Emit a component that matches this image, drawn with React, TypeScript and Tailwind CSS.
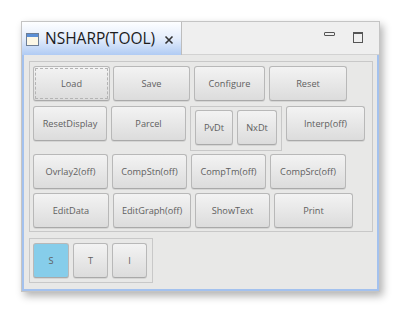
import React from "react";

const font = { fontFamily: '"Open Sans", "Noto Sans", sans-serif' };

function Btn({ label, w, focus, active, h = 35, className = "" }: { label: string; w: number; focus?: boolean; active?: boolean; h?: number; className?: string }) {
  return (
    <div
      style={{ width: w, height: h }}
      className={
        "flex shrink-0 items-center justify-center rounded-[3px] border border-[#b8b8b8] border-b-[#a9a9a9] text-[9.2px] text-[#606060] shadow-[0_1px_0_rgba(0,0,0,0.08)] " +
        (active ? "bg-[#86cdea] " : "bg-gradient-to-b from-[#f3f3f3] to-[#dcdcdc] ") +
        (focus ? "outline-1 outline-dashed outline-[#b4b4b4] outline-offset-[-3px] " : "") +
        className
      }
    >
      {label}
    </div>
  );
}

export default function App() {
  return (
    <div className="h-[313px] w-[403px] bg-white pl-[21px] pt-[21px]" style={font}>
      <div className="flex h-[271px] w-[359px] flex-col border border-[#c4c4c4] bg-[#efefef] shadow-[3px_4px_8px_rgba(0,0,0,0.3)]">
        {/* header */}
        <div className="flex h-[33px] shrink-0">
          <div className="flex w-[160px] items-center border-r border-[#bdbdbd] bg-gradient-to-b from-[#fdfeff] via-[#e4edfb] to-[#b0cbf3] pl-[4px]">
            <svg width="13" height="13" viewBox="0 0 13 13" className="mt-[2px]">
              <rect x="0.5" y="0.5" width="12" height="12" fill="#fdf8e6" stroke="#6d7e95" />
              <rect x="1" y="1" width="11" height="3" fill="#5b8fd6" />
            </svg>
            <span className="ml-[6px] text-[15.5px] leading-none text-[#1c1c1c]">NSHARP(TOOL)</span>
            <svg width="10" height="10" viewBox="0 0 10 10" className="ml-[9px] mt-[2px]">
              <path d="M1.5 1.5 L8.5 8.5 M8.5 1.5 L1.5 8.5" stroke="#333" strokeWidth="1.6" />
            </svg>
          </div>
          <div className="relative flex-1 border-b border-[#d2d2d2]">
            <div className="absolute left-[142px] top-[10px] h-[4px] w-[11px] rounded-[1px] border border-[#555]" />
            <div className="absolute left-[171px] top-[10px] h-[11px] w-[10px] border border-t-2 border-[#555]" />
          </div>
        </div>
        {/* content */}
        <div className="flex flex-1 flex-col border-x-2 border-b-2 border-[#a3c1ee] bg-[#e8e8e7] pl-[5px] pt-[6px]">
          <div className="flex w-[344px] flex-col gap-[4px] border border-[#c8c8c8] pb-[3px] pl-[3px] pt-[4px]">
            <div className="flex gap-[3px]">
              <Btn label="Load" w={77} focus />
              <Btn label="Save" w={77} />
              <Btn label="Configure" w={71} className="ml-[1px]" />
              <Btn label="Reset" w={78} className="ml-[1px]" />
            </div>
            <div className="mt-[1px] flex items-start gap-[4px]">
              <Btn label="ResetDisplay" w={74} />
              <Btn label="Parcel" w={75} />
              <div className="flex h-[45px] gap-[4px] border border-[#c8c8c8] pl-[4px] pr-[4px] pt-[3px]">
                <Btn label="PvDt" w={38} />
                <Btn label="NxDt" w={40} />
              </div>
              <Btn label="Interp(off)" w={79} />
            </div>
            <div className="mt-[-1px] flex gap-[4px]">
              <Btn label="Ovrlay2(off)" w={75} />
              <Btn label="CompStn(off)" w={75} />
              <Btn label="CompTm(off)" w={75} />
              <Btn label="CompSrc(off)" w={76} />
            </div>
            <div className="flex gap-[4px]">
              <Btn label="EditData" w={76} />
              <Btn label="EditGraph(off)" w={78} />
              <Btn label="ShowText" w={75} />
              <Btn label="Print" w={79} />
            </div>
          </div>
          <div className="mt-[6px] flex w-[124px] gap-[4px] border border-[#c8c8c8] py-[4px] pl-[3px]">
            <Btn label="S" w={36} active />
            <Btn label="T" w={35} />
            <Btn label="I" w={35} />
          </div>
        </div>
      </div>
    </div>
  );
}
